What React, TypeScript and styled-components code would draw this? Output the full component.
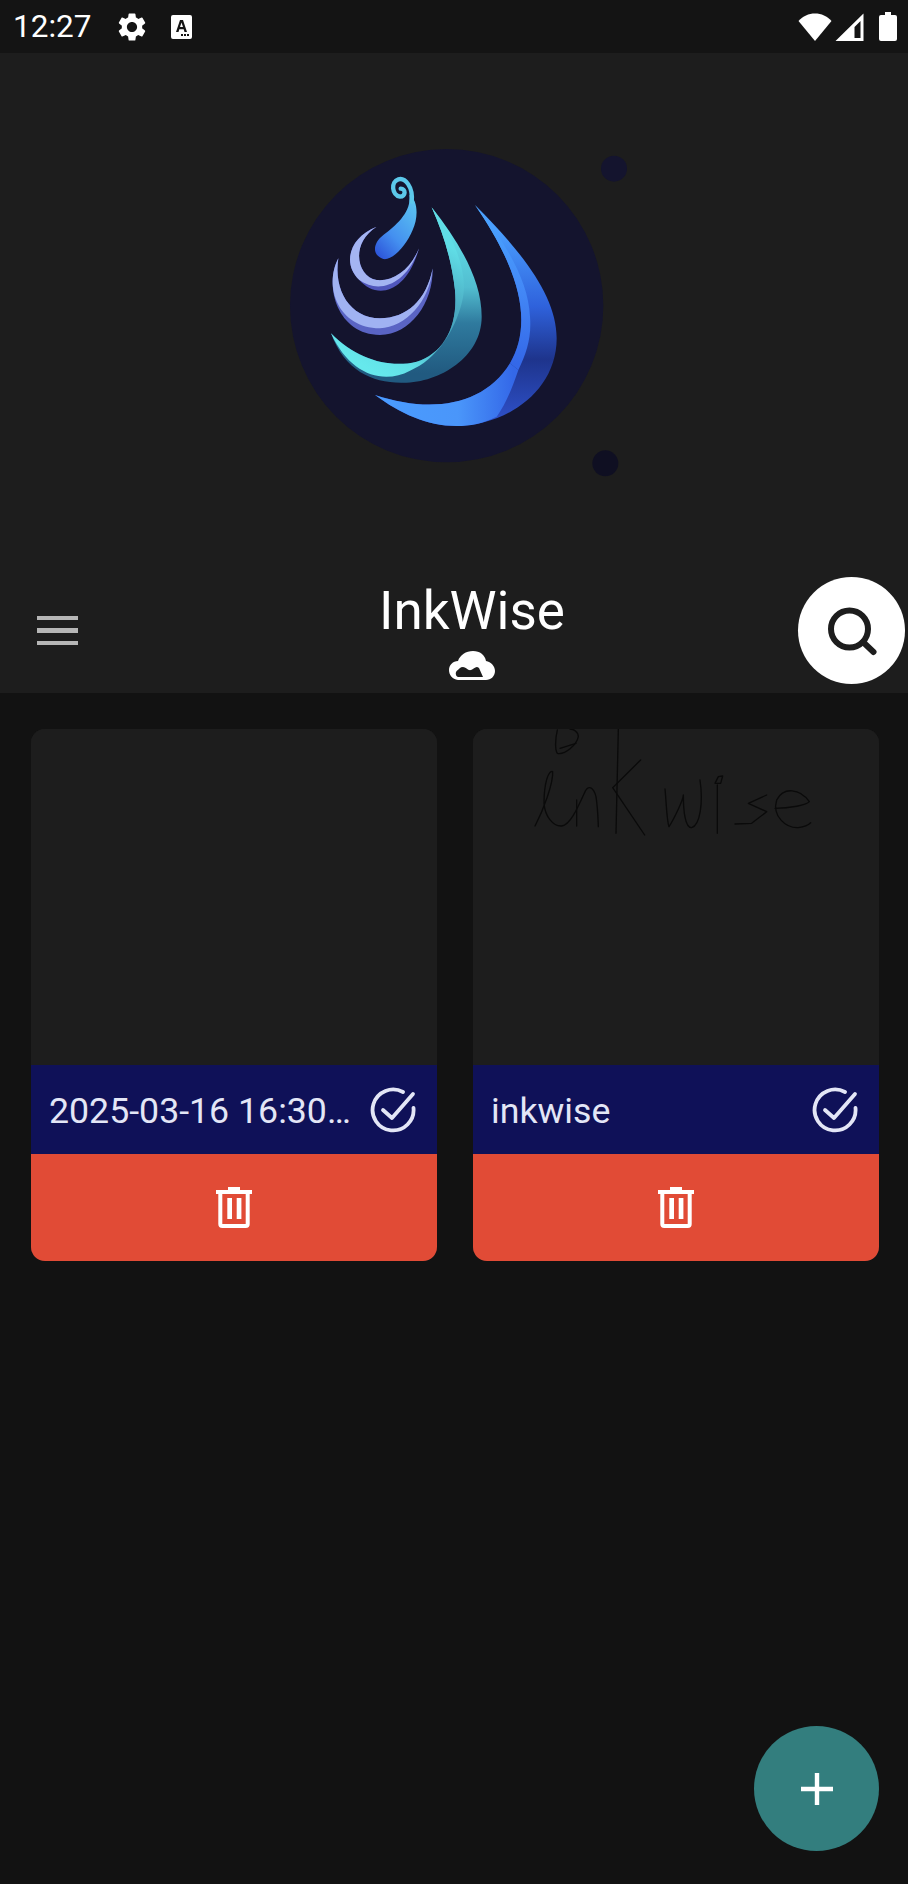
import React from 'react';
import styled, {createGlobalStyle} from 'styled-components';

const GlobalStyle = createGlobalStyle`
  html, body {
    margin: 0;
    padding: 0;
    background: #121212;
    font-family: Roboto, "Liberation Sans", sans-serif;
  }
`

const Page = styled.div`
  position: relative;
  width: 908px;
  height: 1884px;
  overflow: hidden;
  display: flex;
  flex-direction: column;
  background: #121212;
`

const StatusBar = styled.div`
  height: 53px;
  background: #141414;
  display: flex;
  align-items: center;
  padding: 0 11px 0 13px;
`

const Time = styled.span`
  color: #fff;
  font-size: 31.5px;
  line-height: 53px;
  width: 102px;
`

const StatusIcon = styled.svg<{$gap?: number}>`
  display: block;
  margin-left: ${props => props.$gap || 0}px;
  fill: #fff;
`

const Spacer = styled.div`
  flex: 1;
`

const Header = styled.header`
  height: 640px;
  background: #1d1d1d;
  padding-top: 77px;
  box-sizing: border-box;
`

const Logo = styled.svg`
  display: block;
  width: 370px;
  height: 360px;
  margin-left: 270px;
`

const TitleRow = styled.div`
  display: grid;
  grid-template-columns: 146px 652px 107px;
  align-items: center;
  margin-top: 87px;
  height: 107px;
`

const MenuButton = styled.div`
  width: 41px;
  margin-left: 37px;
  display: flex;
  flex-direction: column;
  gap: 8px;
`

const MenuBar = styled.div`
  height: 4.500px;
  background: #b6b6b6;
`

const TitleBlock = styled.div`
  align-self: start;
  display: flex;
  flex-direction: column;
  align-items: center;
  gap: 9px;
  padding-top: 3px;
`

const Title = styled.div`
  color: #fff;
  font-size: 53px;
  line-height: 62px;
`

const SearchButton = styled.div`
  width: 107px;
  height: 107px;
  border-radius: 50%;
  background: #fff;
  display: flex;
  align-items: center;
  justify-content: center;
`

const Grid = styled.main`
  display: grid;
  grid-template-columns: 406px 406px;
  column-gap: 36px;
  padding: 36px 29px 0 31px;
`

const Card = styled.article`
  height: 532px;
  border-radius: 14px;
  overflow: hidden;
  display: flex;
  flex-direction: column;
  background: #1d1d1d;
`

const Thumb = styled.div`
  height: 336px;
  background: #1d1d1d;
`

const Sketch = styled.svg`
  display: block;
  width: 406px;
  height: 336px;
  fill: none;
  stroke: #0a0a0a;
  stroke-width: 4;
  stroke-linejoin: round;
  stroke-linecap: round;
`

const NameBar = styled.div`
  height: 89px;
  background: #0f1158;
  display: flex;
  align-items: center;
  padding: 0 21px 0 18px;
  color: #e3e6f6;
`

const Name = styled.div`
  flex: 1;
  font-size: 35.7px;
  margin-top: 2px;
  white-space: nowrap;
  overflow: hidden;
`

const DeleteBar = styled.div`
  flex: 1;
  background: #e14b36;
  display: flex;
  align-items: center;
  justify-content: center;
`

const Fab = styled.div`
  position: absolute;
  right: 29px;
  bottom: 33px;
  width: 125px;
  height: 125px;
  border-radius: 50%;
  background: #337e7e;
  display: flex;
  align-items: center;
  justify-content: center;
`

const CheckIcon = () => (
    <svg width="46" height="46" viewBox="0 0 46 46" fill="none" stroke="#e3e6f6" strokeWidth="3.800" strokeLinecap="round" strokeLinejoin="round">
        <path d="M33 5 A20.500 20.500 0 1 0 43.500 21"/>
        <path d="M13 23 L22 31 L43 7"/>
    </svg>
)

const TrashIcon = () => (
    <svg width="36" height="41" viewBox="0 0 36 41">
        <path fill="#fff" d="M0 3h12V0h12v3h12v4H0z"/>
        <path fill="none" stroke="#fff" strokeWidth="4" d="M4.300 6v31q0 2 2 2h23.400q2 0 2-2V6"/>
        <path fill="#fff" d="M11.300 11h4.700v21h-4.700zM20.700 11h4.700v21h-4.700z"/>
    </svg>
)

const NoteCard = (props: {name: string, children?: React.ReactNode}) => {
    return (
        <Card>
            <Thumb>{props.children}</Thumb>
            <NameBar>
                <Name>{props.name}</Name>
                <CheckIcon/>
            </NameBar>
            <DeleteBar>
                <TrashIcon/>
            </DeleteBar>
        </Card>
    )
}

export default function App() {
    return (
        <Page>
            <GlobalStyle/>
            <StatusBar>
                <Time>12:27</Time>
                <StatusIcon width="34" height="34" viewBox="0 0 24 24">
                    <path d="M19.14 12.94c.04-.3.06-.61.06-.94 0-.32-.02-.64-.07-.94l2.03-1.58a.49.49 0 0 0 .12-.61l-1.92-3.32a.488.488 0 0 0-.59-.22l-2.39.96c-.5-.38-1.03-.7-1.62-.94l-.36-2.54a.484.484 0 0 0-.48-.41h-3.84c-.24 0-.43.17-.47.41l-.36 2.54c-.59.24-1.13.57-1.62.94l-2.39-.96c-.22-.08-.47 0-.59.22L2.74 8.87c-.12.21-.08.47.12.61l2.03 1.58c-.05.3-.09.63-.09.94s.02.64.07.94l-2.03 1.58a.49.49 0 0 0-.12.61l1.92 3.32c.12.22.37.29.59.22l2.39-.96c.5.38 1.03.7 1.62.94l.36 2.54c.05.24.24.41.48.41h3.84c.24 0 .44-.17.47-.41l.36-2.54c.59-.24 1.13-.56 1.62-.94l2.39.96c.22.08.47 0 .59-.22l1.92-3.32c.12-.22.07-.47-.12-.61l-2.01-1.58zM12 15.600c-1.980 0-3.600-1.620-3.600-3.600s1.620-3.600 3.600-3.600 3.600 1.620 3.600 3.600-1.620 3.600-3.600 3.600z"/>
                </StatusIcon>
                <StatusIcon $gap={22} width="21" height="24" viewBox="0 0 21 24">
                    <path fillRule="evenodd" d="M2 0h17a2 2 0 0 1 2 2v20a2 2 0 0 1-2 2H2a2 2 0 0 1-2-2V2a2 2 0 0 1 2-2zM9 5l-4 12h2.500l.8-2.800h4.400l.8 2.800H16L12 5zM9 12l1.500-4.500L12 12zM10 19v2h2v-2zM13 19v2h2v-2zM16 19v2h2v-2z"/>
                </StatusIcon>
                <Spacer/>
                <StatusIcon width="34" height="28" viewBox="0 0 34 28">
                    <path d="M17 28 L0.500 8 C5 3 10.500 0.500 17 0.500 C23.500 0.500 29 3 33.500 8z"/>
                </StatusIcon>
                <StatusIcon $gap={3} width="29" height="28" viewBox="0 0 29 28">
                    <path fillRule="evenodd" d="M28.500 0.500V28H0.500zM25.500 8l-6 6v11h6z"/>
                </StatusIcon>
                <StatusIcon $gap={15} width="18" height="29" viewBox="0 0 18 29">
                    <path d="M6 0h6v3h4a2 2 0 0 1 2 2v22a2 2 0 0 1-2 2H2a2 2 0 0 1-2-2V5a2 2 0 0 1 2-2h4z"/>
                </StatusIcon>
            </StatusBar>

            <Header>
                <Logo viewBox="0 0 1110 1080">
                    <defs>
                        <linearGradient id="blueBody" gradientUnits="userSpaceOnUse" x1="0" y1="300" x2="0" y2="870">
                            <stop offset="0" stopColor="#4a9fff"/>
                            <stop offset="0.4" stopColor="#2f62dc"/>
                            <stop offset="0.68" stopColor="#1e348c"/>
                            <stop offset="1" stopColor="#2e50c8"/>
                        </linearGradient>
                        <linearGradient id="blueBand" gradientUnits="userSpaceOnUse" x1="0" y1="260" x2="0" y2="700">
                            <stop offset="0" stopColor="#4aa4ff"/>
                            <stop offset="0.5" stopColor="#4388f6"/>
                            <stop offset="1" stopColor="#3468e8"/>
                        </linearGradient>
                        <linearGradient id="blueTail" gradientUnits="userSpaceOnUse" x1="315" y1="0" x2="730" y2="0">
                            <stop offset="0" stopColor="#4a9cff"/>
                            <stop offset="0.6" stopColor="#4a96fa"/>
                            <stop offset="1" stopColor="#3468e8"/>
                        </linearGradient>
                        <linearGradient id="tealBody" gradientUnits="userSpaceOnUse" x1="0" y1="300" x2="0" y2="730">
                            <stop offset="0" stopColor="#62e0e8"/>
                            <stop offset="0.4" stopColor="#52bdd0"/>
                            <stop offset="0.65" stopColor="#2f7a9e"/>
                            <stop offset="1" stopColor="#215a80"/>
                        </linearGradient>
                        <linearGradient id="tealBand" gradientUnits="userSpaceOnUse" x1="540" y1="350" x2="300" y2="720">
                            <stop offset="0" stopColor="#60dde6"/>
                            <stop offset="0.35" stopColor="#4aa8c0"/>
                            <stop offset="0.55" stopColor="#46a6be"/>
                            <stop offset="0.82" stopColor="#60dfe6"/>
                            <stop offset="1" stopColor="#66e8ec"/>
                        </linearGradient>
                        <linearGradient id="dropFill" x1="0.8" y1="0" x2="0.1" y2="1">
                            <stop offset="0" stopColor="#5bc4f0"/>
                            <stop offset="0.6" stopColor="#4490f0"/>
                            <stop offset="1" stopColor="#2c52d8"/>
                        </linearGradient>
                    </defs>
                    <circle cx="530" cy="527" r="470" fill="#14142e"/>
                    <circle cx="1032" cy="116" r="39" fill="#14142e"/>
                    <circle cx="1006" cy="1000" r="39" fill="#0f0f22"/>

                    {/* синяя капля */}
                    <path fill="url(#blueBody)" d="M615 225 C760 370 860 500 860 625 C860 790 700 888 560 888 C470 888 390 850 315 795 C480 850 640 830 720 700 C790 580 750 420 615 225Z"/>
                    <path fill="url(#blueBand)" d="M615 225 C705 335 775 450 780 560 C785 620 770 670 745 720 L720 700 C790 580 750 420 615 225Z"/>
                    <path fill="url(#blueTail)" d="M315 795 C480 850 640 830 720 700 L745 720 C725 780 705 825 680 860 C640 880 600 888 560 888 C470 888 390 850 315 795Z"/>

                    {/* бирюзовая */}
                    <path fill="url(#tealBody)" d="M485 232 C570 340 635 450 635 560 C635 680 510 758 400 758 C310 760 225 725 183 610 C260 690 360 715 440 695 C520 670 565 590 555 480 C545 390 520 310 485 232Z"/>
                    <path fill="url(#tealBand)" d="M485 232 C550 320 600 430 575 520 C555 600 500 690 420 722 C340 765 240 735 183 610 C260 690 360 715 440 695 C520 670 565 590 555 480 C545 390 520 310 485 232Z"/>

                    {/* фиолетовые дуги */}
                    <path fill="#5a64c4" d="M205 385 C160 470 205 615 330 615 C420 615 490 520 488 415 C470 510 410 565 330 565 C240 565 190 480 205 385Z"/>
                    <path fill="#a0b2f2" d="M205 385 C160 470 205 595 330 595 C405 593 480 515 488 415 C470 510 410 565 330 565 C240 565 190 480 205 385Z"/>
                    <path fill="#5056bc" d="M320 290 C240 320 215 400 268 450 C320 510 410 490 447 355 C420 420 370 455 320 450 C260 440 240 340 320 290Z"/>
                    <path fill="#a4b4f2" d="M320 290 C240 320 215 400 268 450 C330 495 412 460 447 355 C420 420 370 455 320 450 C260 440 240 340 320 290Z"/>

                    {/* завиток */}
                    <path fill="url(#dropFill)" d="M418 195 C445 210 445 265 428 300 C408 350 365 392 340 387 C305 375 308 340 340 315 C380 285 425 245 418 195Z"/>
                    <path fill="none" stroke="#5cc8ea" strokeWidth="13" strokeLinecap="round" d="M425 215 C430 170 405 142 385 148 C362 155 365 195 390 200 C408 200 408 176 392 176"/>
                </Logo>

                <TitleRow>
                    <MenuButton>
                        <MenuBar/>
                        <MenuBar/>
                        <MenuBar/>
                    </MenuButton>
                    <TitleBlock>
                        <Title>InkWise</Title>
                        <svg width="46" height="29" viewBox="0 0 46 29">
                            <path fill="#fff" fillRule="evenodd" d="M9 29 C3 28 0 24 0 19 C0 14 4 10 9 10 C11 4 17 0 24 0 C31 0 36 4 37 10 C42 11 46 15 46 20 C46 25 42 29 37 29Z M9 26 H34 L30 17 C27 14 25 18 22 19 C19 20 17 16 14 16 C11 16 10 18 9 19 C6 20 6 25 9 26Z"/>
                        </svg>
                    </TitleBlock>
                    <SearchButton>
                        <svg width="60" height="60" viewBox="0 0 60 60" fill="none" stroke="#1d1d1d" strokeWidth="6" strokeLinecap="round">
                            <circle cx="27.500" cy="28" r="18.500"/>
                            <path d="M41 41 L51.500 51"/>
                        </svg>
                    </SearchButton>
                </TitleRow>
            </Header>

            <Grid>
                <NoteCard name="2025-03-16 16:30…"/>
                <NoteCard name="inkwise">
                    <Sketch viewBox="9 27 1218 1008">
                        <path d="M262 30 C255 60 255 90 262 100 C285 105 320 75 325 50 C325 35 310 27 300 27"/>
                        <path d="M270 85 L318 70"/>
                        <path d="M195 318 C220 270 250 190 248 155 C235 150 222 190 222 250 C225 290 250 320 275 318 C300 315 320 270 345 215 C355 195 370 200 378 230 C384 270 384 300 385 320"/>
                        <path d="M320 240 L320 318"/>
                        <path d="M445 27 L438 340"/>
                        <path d="M512 120 L428 203 L524 345"/>
                        <path d="M585 207 C590 260 590 300 597 320 C610 300 640 240 640 225 C640 270 645 325 665 323 C690 315 700 250 690 180"/>
                        <path d="M742 195 L742 340"/>
                        <path d="M735 190 L745 170 L758 168 L752 190Z"/>
                        <path d="M890 225 L835 250 L890 275 L845 310 L795 312"/>
                        <path d="M915 265 C960 265 1010 255 1018 245 C990 205 940 200 920 240 C905 290 950 325 985 323 C1005 320 1015 315 1022 308"/>
                    </Sketch>
                </NoteCard>
            </Grid>

            <Fab>
                <svg width="32" height="32" viewBox="0 0 32 32">
                    <path fill="#fff" d="M13.800 0h4.400v13.800H32v4.400H18.200V32h-4.400V18.200H0v-4.400h13.800z"/>
                </svg>
            </Fab>
        </Page>
    );
}
